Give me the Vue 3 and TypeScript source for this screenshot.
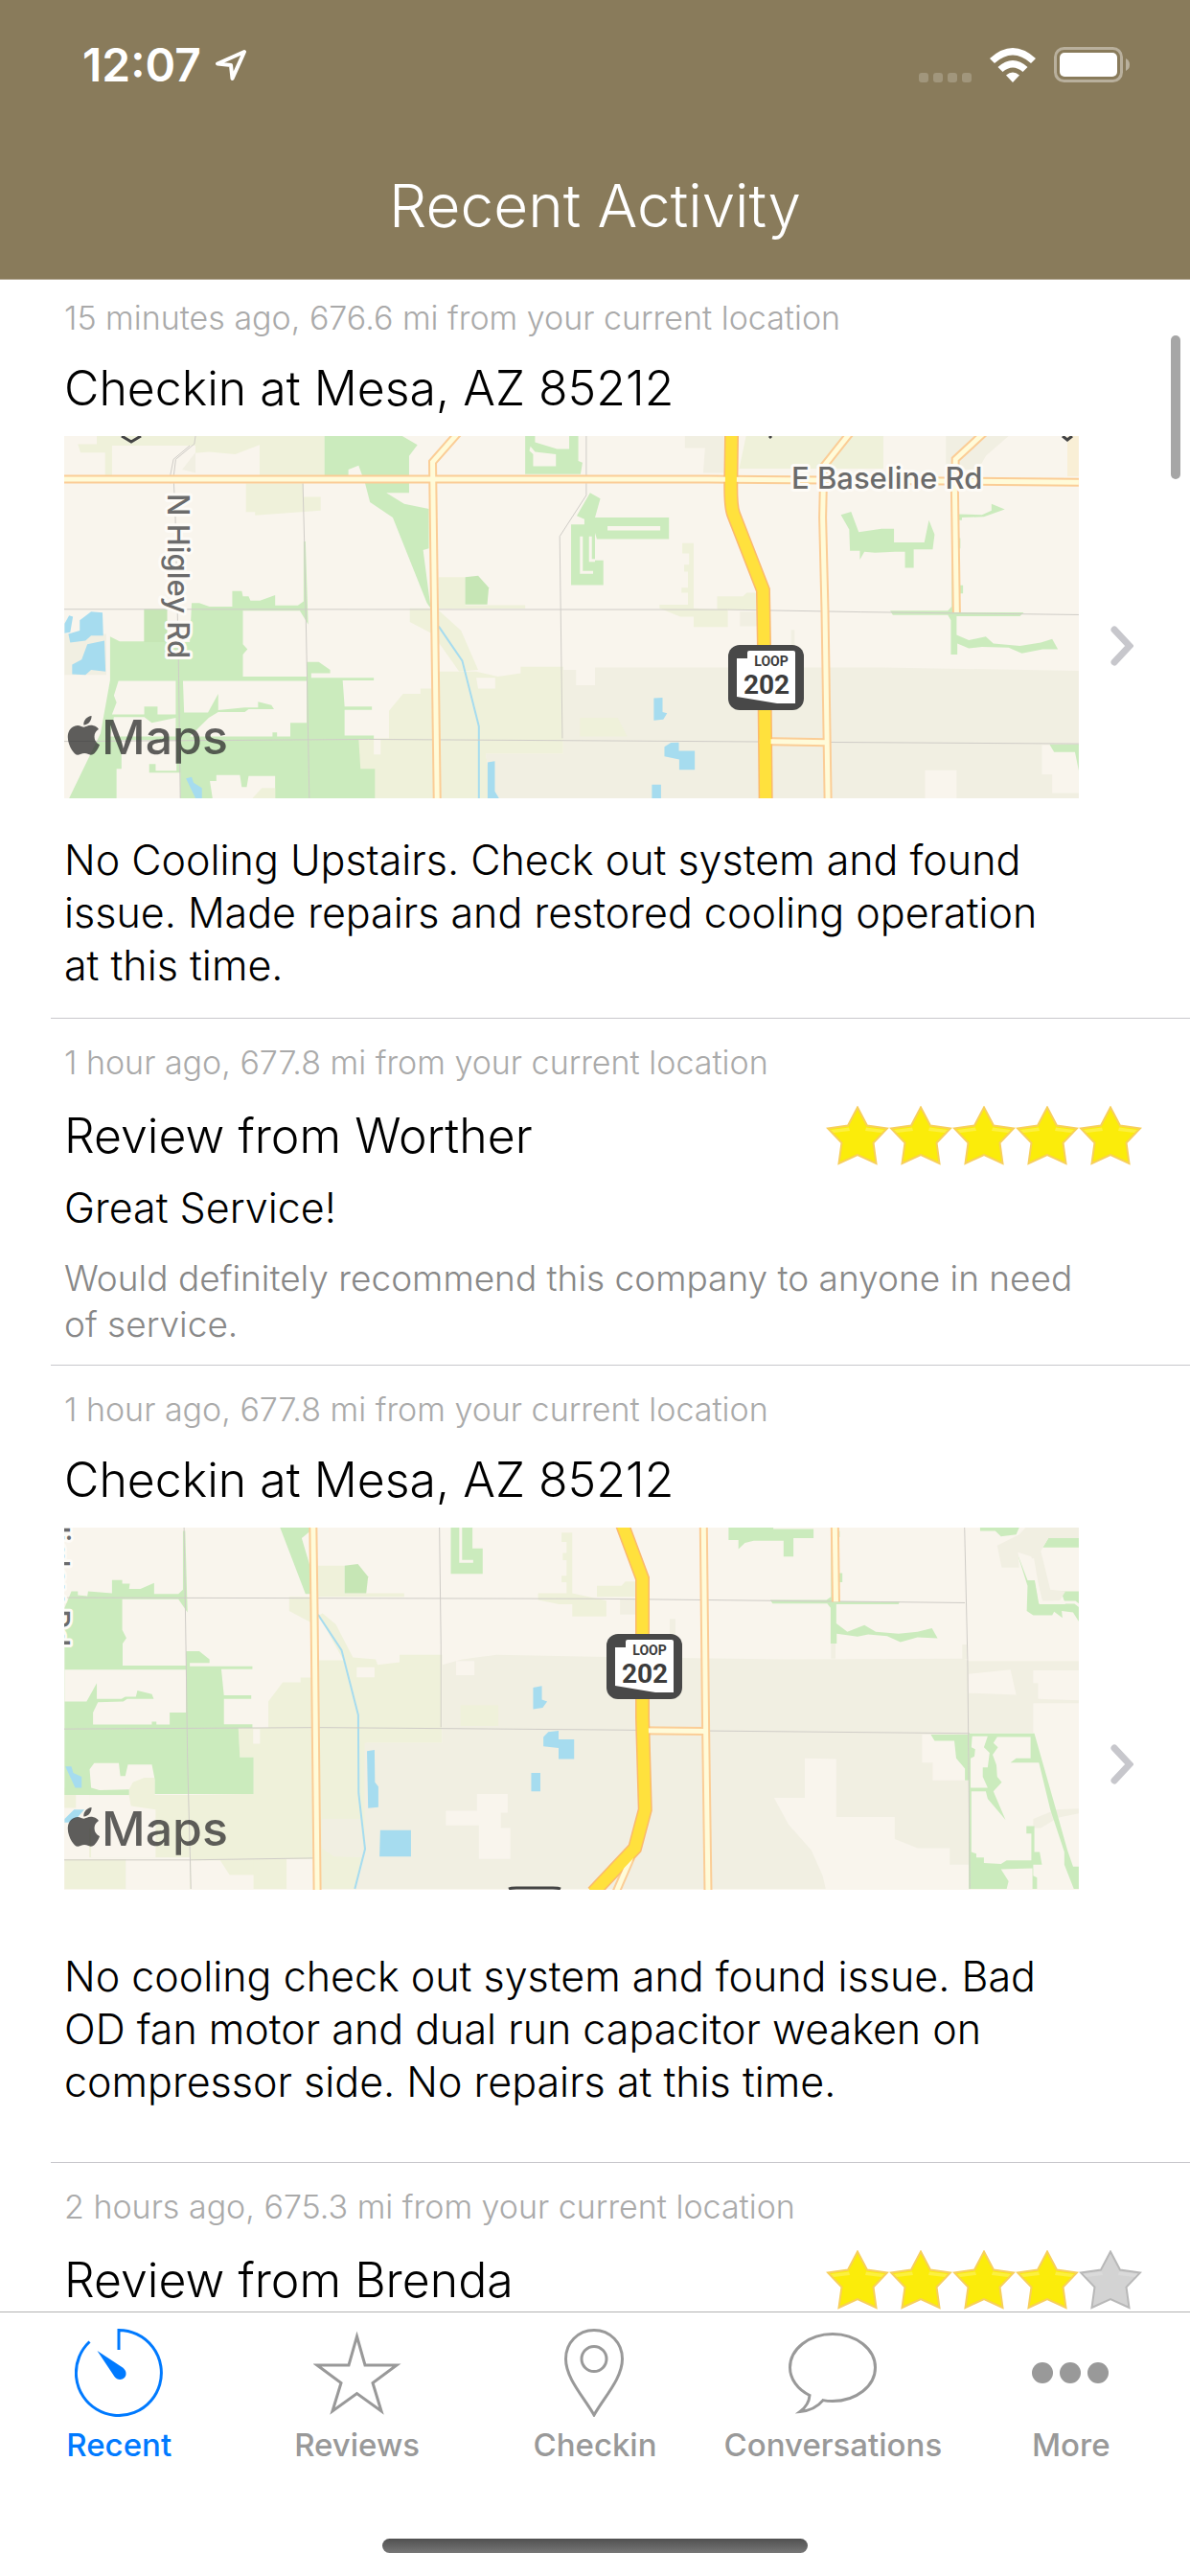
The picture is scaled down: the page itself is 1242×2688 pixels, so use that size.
<script setup lang="ts">
type ShapeKind = 'olive' | 'beige' | 'sand' | 'cream' | 'green' | 'park' | 'water' | 'stream' | 'lane'

interface Shape {
  kind: ShapeKind
  east?: boolean
  d: string
}

interface Road {
  kind: 'street' | 'road' | 'highway'
  east?: boolean
  d: string
}

interface Label {
  text: string
  x: number
  y: number
  vertical?: boolean
}

interface MapTile {
  top: number
  scaleY: number
  shapes: Shape[]
  roads: Road[]
  labels: Label[]
  shield: { x: number; y: number }
  extra: string
}

interface Checkin {
  type: 'checkin'
  meta: string
  title: string
  body: string
  roomy: boolean
  map: MapTile
}

interface Review {
  type: 'review'
  meta: string
  title: string
  stars: number
  headline: string
  comment: string
}

const northMap: MapTile = {
  top: 462,
  scaleY: 0.3572,
  shapes: [
    { kind: 'olive', d: 'M255 462H855V578H684V488L620 515 550 508 515 512V490H295V578H277V510H212L205 486H255Z' },
    { kind: 'olive', d: 'M648 600H800V640H845V680L672 694V684H648Z' },
    { kind: 'olive', d: 'M1156 874H1226V956H1384V966H1156ZM1080 965H1150L1215 1030 1260 1145 1210 1150 1140 1040 1080 1005Z' },
    { kind: 'olive', d: 'M1108 1200H1137V1150H1255L1312 1165 1372 1155V1136H1484V1390H1280L1300 1520H725V1345H1025V1265L1062 1215H1108Z' },
    { kind: 'cream', d: 'M1255 1168H1305V1200H1260ZM985 1347H1003V1392H985Z' },
    { kind: 'beige', d: 'M170 1040H280V1160H170ZM480 560L515 510V570Z' },
    { kind: 'beige', east: true, d: 'M-84 1145H-50V1190H0V1138H760L1275 1148V1520H-268L-288 1390H-84Z' },
    { kind: 'olive', east: true, d: 'M-40 1285H60L85 1340H-40Z' },
    { kind: 'green', d: 'M855 462H1060L1100 488 1078 520V628H1018L1065 660 1130 675V790L1115 795 1135 965 1125 950 1035 700 975 655 962 600 945 548 918 560V578H855Z' },
    { kind: 'park', d: 'M1226 874L1260 870 1288 905 1284 954H1226Z' },
    { kind: 'green', d: 'M290 1048L315 1062H380V968H440V1064H500L505 950H525L552 960 612 960V915H637L640 930H655L660 943H685L725 927V957H785L800 945V770H805L812 1012 790 972H640V1070L652 1085 640 1100V1165H808V1122H840L870 1145V1155H820V1168H985V1176H903L908 1252H980V1262H908V1337H985V1347H945L950 1434H988V1520H725V1455H655L650 1487H637L632 1452H570V1470H553L560 1520H475V1445H393V1420H410V1440H465V1350H320V1434H307V1520H182L265 1330 290 1175Z' },
    { kind: 'park', d: 'M380 968H440V1064H380Z' },
    { kind: 'cream', d: 'M312 1177H463V1275H415V1252H380V1275H295L307 1240 300 1220ZM482 1177H808V1300H765V1340H730V1328H718V1340H500L550 1285 575 1268H645L655 1260H722L715 1248 680 1238V1255H645L575 1263V1215L548 1270H485ZM300 1283H380L400 1300 463 1285V1340H290Z' },
    { kind: 'olive', d: 'M665 1520L690 1490H725V1520Z' },
    { kind: 'green', d: 'M1384 462H1524V535L1535 540 1530 573H1384Z' },
    { kind: 'cream', d: 'M1398 492L1410 508 1465 515V550H1405V515L1395 505ZM1410 462H1500V500H1468L1410 480Z' },
    { kind: 'water', d: 'M210 1000L240 975 270 978 272 1045 240 1045 225 1060 185 1065 180 1040 210 1030ZM170 1010L182 986 192 990 185 1035 170 1038ZM230 1070L275 1060 278 1150 240 1145 225 1160 190 1158V1130L215 1115ZM490 1462L505 1458 510 1475 532 1490V1520H515ZM1285 1415L1304 1412V1500L1315 1520H1285Z' },
    { kind: 'stream', d: 'M1156 1018L1218 1118 1262 1310V1520' },
    { kind: 'beige', east: true, d: 'M237 462H340V570H285L290 497H237ZM925 462H1090L1030 520 1010 560H925ZM382 975H428V1018H382ZM517 1028H526V1080H517Z' },
    { kind: 'olive', east: true, d: 'M398 462H760V557H380ZM230 775H260V965L350 970V1020H260V990H225L170 965V955H245V920H228V905H245V858H235V838H248V805H230ZM322 930H390L400 920H430V970H322Z' },
    { kind: 'sand', east: true, d: 'M1245 462H1275V580H1245Z' },
    { kind: 'green', east: true, d: 'M-63 720H-28V705L-48 695-13 628 14 645 0 700H195V763H5L0 745V825H22V897H-63Z' },
    { kind: 'cream', east: true, d: 'M33 725H172V738H33Z' },
    { kind: 'lane', east: true, d: 'M-36 755V860H-5M-12 755V825H0' },
    { kind: 'green', east: true, d: 'M648 692L675 683 695 743 755 733H788V773H868L880 708 895 750 890 793H840V847H817V800H790L738 803 710 800 698 823V797H672L670 735Z' },
    { kind: 'green', east: true, d: 'M955 690L1020 692 1045 680V660L1080 676 1025 698 967 700V708H955Z' },
    { kind: 'green', east: true, d: 'M778 972H930L940 960V760H963V790H953V898H970V922H960V977H1130L1120 988H953V1043L985 1058 1030 1048 1050 1068 1120 1075 1175 1065 1205 1055 1220 1085 1180 1085 1125 1097 1090 1080 1020 1078 985 1082 955 1068V1100H938V1000L930 985H785Z' },
    { kind: 'cream', east: true, d: 'M1178 1365H1275V1505H1205V1450H1178ZM870 1438H953V1520H870Z' },
    { kind: 'green', east: true, d: 'M1198 1363H1275V1440L1265 1385H1210Z' },
    { kind: 'water', east: true, d: 'M155 1228L178 1226V1268L190 1272 180 1290 155 1293ZM183 1370L200 1358 221 1357V1382H263V1437H222V1407L183 1398ZM150 1480H174V1520H150Z' },
  ],
  roads: [
    { kind: 'street', east: true, d: 'M-1399 968L350 969 700 976 1275 984' },
    { kind: 'street', d: 'M169 1354L970 1348 1568 1352 2843 1361' },
    { kind: 'street', d: 'M515 462L512 485 463 530 458 575V600L462 700 470 1100 475 1520' },
    { kind: 'street', d: 'M500 490L457 530 449 575V600' },
    { kind: 'street', d: 'M798 600L802 770 808 1100 815 1520' },
    { kind: 'street', d: 'M1545 462V635L1475 755 1482 1345' },
    { kind: 'road', east: true, d: 'M-1399 588H300L1275 597' },
    { kind: 'road', d: 'M1208 452L1140 538 1145 965 1152 1530' },
    { kind: 'road', east: true, d: 'M673 452L603 550 600 700 606 970 614 1530' },
    { kind: 'road', east: true, d: 'M1026 452L950 530 948 620 953 977' },
    { kind: 'road', east: true, d: 'M434 1354L612 1357' },
    { kind: 'highway', east: true, d: 'M360 452L358 610Q358 670 365 690L443 912 446 1100 450 1530' },
  ],
  labels: [
    { text: 'N Higley Rd', x: 108, y: 60, vertical: true },
    { text: 'E Baseline Rd', x: 759, y: 55 },
  ],
  shield: { x: 693, y: 218 },
  extra: 'M60 0L70 6 80 0M736 0L738 2M1042 0L1047 4 1052 0',
}

const southMap: MapTile = {
  top: 481,
  scaleY: 0.3828,
  shapes: [
    { kind: 'olive', d: 'M762 670H820V740L762 708ZM838 585H907V660H1065V670H838Z' },
    { kind: 'olive', d: 'M850 715L885 745 930 835 990 840 995 855 1053 848V828H1165V1068H965L970 1360 935 1466H500V1210H668V1107H632L628 1027H707V955L745 903H792V890H840V843H905L840 720Z' },
    { kind: 'olive', d: 'M170 1385H332V1466H170ZM340 1195L350 1175 380 1163H408V1210H668V1466H640V1380H235V1212H340ZM170 1190H200V1245H170ZM668 1207H840V1385H500V1210Z' },
    { kind: 'cream', d: 'M235 1212H340L345 1240 410 1250V1380H240V1300H235ZM332 1388H500V1466H332ZM503 1388H580L605 1428H668V1466H503ZM755 1385H825V1466H755Z' },
    { kind: 'cream', d: 'M940 862H987V889H940ZM667 1030H685V1070H667Z' },
    { kind: 'beige', east: true, d: 'M-403 855L-350 840-260 828 0 833 500 840 970 838 985 845H1275V960H1155V1040H985V1400H935V1355H850L790 1330V1270H636V1112L553 1110V1218H472L510 1290 570 1360 600 1430 608 1466H-633L-607 1355V1068H-403Z' },
    { kind: 'cream', east: true, d: 'M985 880L1095 868 1110 937 985 932ZM1155 870H1275V952L1168 948V905H1155ZM862 1045H952L985 1170H890V1122H862Z' },
    { kind: 'cream', d: 'M1175 1253H1257V1207H1338V1258H1320V1300H1345V1384H1262V1293H1175ZM1202 845H1250V883H1202Z' },
    { kind: 'olive', d: 'M1213 965H1313V1022H1213Z' },
    { kind: 'beige', d: 'M848 1275H950L960 1380 880 1378 848 1355Z' },
    { kind: 'green', d: 'M738 481H818V490L795 510 818 590V662H805Z' },
    { kind: 'park', d: 'M908 585L943 580 970 615 965 660H908Z' },
    { kind: 'green', d: 'M1188 481H1245V538H1272V607H1188Z' },
    { kind: 'lane', d: 'M1214 475V573H1247' },
    { kind: 'green', d: 'M170 700L188 655H205V665L230 668 232 655 295 660V624H322V634H342L340 648H370L406 632V662H470L482 650V490H488L494 712 470 676H322V760L333 782 323 797V857H490V818H525L552 840V850H500V859H665V867H583L590 938H662V948H590V1017H665V1027H628L632 1107H668V1207H408V1168L400 1127H337L330 1158H317L313 1123H248L236 1140 240 1190 262 1197 340 1195V1210H170Z' },
    { kind: 'cream', d: 'M170 868H490V985H447V1018H412V1010H400V1018H245V985L258 957 325 955 335 948H405L400 935 362 925 358 942H330L320 948H255V905L228 955H170Z' },
    { kind: 'water', d: 'M172 1132H188L193 1150 215 1160V1190H198ZM170 1275L195 1250H222L205 1270 180 1285H170ZM967 1090L987 1087 988 1175 997 1187V1243L970 1246ZM1002 1306H1083V1378H1000ZM1405 917L1428 913V950L1442 955 1430 972 1405 976ZM1432 1052L1445 1038 1472 1035V1058H1513V1112H1472V1082L1432 1077ZM1400 1150H1424V1200H1400Z' },
    { kind: 'stream', d: 'M838 718L900 815 944 992 945 1205 962 1357 935 1466' },
    { kind: 'olive', east: true, d: 'M-88 495H-60V660L30 680V723H-60V690H-95L-150 678V660H-75V630H-88V612H-75V570H-85V550H-75V520H-88ZM5 640H70L80 628H110V670H5Z' },
    { kind: 'beige', east: true, d: 'M66 675H110V718H66ZM197 730H212V780H197ZM622 797H634V838H622ZM968 800H980V840H968Z' },
    { kind: 'green', east: true, d: 'M352 481H470V485H576V510H523V560H497V517H418L395 523 378 540V515H352Z' },
    { kind: 'green', east: true, d: 'M462 678H610L622 670V490H645V507H637V605H652V630H640V682H803L800 690H636V742L665 765 710 747 740 765 800 770 850 765 888 755 903 783 850 780 805 793 770 777 720 772 692 778 637 770V797H621V700L612 688H468Z' },
    { kind: 'green', east: true, d: 'M1015 481H1118L1110 500 1070 505 1055 490H1015ZM1195 510H1275V535H1180ZM1112 548L1140 625H1160L1172 690H1275V737L1260 712 1230 708 1232 727 1210 710 1205 720H1155L1138 708 1140 640ZM1228 655H1275V690H1240Z' },
    { kind: 'beige', east: true, d: 'M1060 530L1118 500 1135 481H1275V510H1195L1175 545 1200 650 1240 655 1225 680 1180 683 1150 560 1115 548 1118 590H1072Z' },
    { kind: 'lane', east: true, d: 'M1153 565L1173 685H1265L1278 695' },
    { kind: 'beige', east: true, d: 'M1155 1275L1215 1250 1275 1247V1260L1220 1272 1175 1300H1155Z' },
    { kind: 'green', east: true, d: 'M885 1045H985V1170H975V1138L952 1110 947 1062H895Z' },
    { kind: 'green', east: true, d: 'M985 1042H1158L1215 1250 1245 1360 1260 1405H1275V1466H1262L1237 1400V1365L1200 1250 1170 1122H1095L1110 1110H1148V1052H1060L1050 1068 1062 1080 1048 1100 1058 1128 1060 1160 1072 1175 1050 1200 1082 1278 1035 1220 1030 1200H992V1365L1005 1370V1380H1025V1395L1070 1398 1085 1388H1150V1315H1137V1295H1158V1365H1172L1178 1400H1155V1430L1165 1435V1466H1153V1410L1070 1412 1090 1445 1085 1466H985Z' },
    { kind: 'cream', east: true, d: 'M994 1050H1035L1025 1080 1040 1095 1035 1135H1022V1160L1035 1190H990V1110L1000 1105 1002 1085 992 1080Z' },
  ],
  roads: [
    { kind: 'street', east: true, d: 'M-1398 672L0 675 975 686' },
    { kind: 'street', d: 'M169 1030L840 1026 1568 1032 2555 1042' },
    { kind: 'street', d: 'M485 481L490 820 494 1110 503 1466' },
    { kind: 'street', d: 'M1158 481L1162 800V1025' },
    { kind: 'street', d: 'M169 1387H500L825 1382' },
    { kind: 'street', east: true, d: 'M974 481L982 840 988 1466' },
    { kind: 'road', d: 'M825 470L828 700 836 1476' },
    { kind: 'road', east: true, d: 'M286 470L292 1035 298 1476' },
    { kind: 'road', east: true, d: 'M632 470L635 683' },
    { kind: 'road', east: true, d: 'M112 1034L290 1036' },
    { kind: 'road', east: true, d: 'M95 1380L55 1476' },
    { kind: 'highway', east: true, d: 'M71 470L125 620V1000L132 1250 105 1355-5 1476' },
  ],
  labels: [{ text: 'N Higley Rd', x: -17, y: -48, vertical: true }],
  shield: { x: 566, y: 111 },
  extra: 'M464 377Q466 376 472 376H510Q516 376 518 377',
}

const items: (Checkin | Review)[] = [
  {
    type: 'checkin',
    meta: '15 minutes ago, 676.6 mi from your current location',
    title: 'Checkin at Mesa, AZ 85212',
    body: 'No Cooling Upstairs. Check out system and found issue. Made repairs and restored cooling operation at this time.',
    roomy: false,
    map: northMap,
  },
  {
    type: 'review',
    meta: '1 hour ago, 677.8 mi from your current location',
    title: 'Review from Worther',
    stars: 5,
    headline: 'Great Service!',
    comment: 'Would definitely recommend this company to anyone in need of service.',
  },
  {
    type: 'checkin',
    meta: '1 hour ago, 677.8 mi from your current location',
    title: 'Checkin at Mesa, AZ 85212',
    body: 'No cooling check out system and found issue. Bad OD fan motor and dual run capacitor weaken on compressor side. No repairs at this time.',
    roomy: true,
    map: southMap,
  },
  {
    type: 'review',
    meta: '2 hours ago, 675.3 mi from your current location',
    title: 'Review from Brenda',
    stars: 4,
    headline: '',
    comment: '',
  },
]

const tabs = [
  { name: 'Recent', icon: 'recent' },
  { name: 'Reviews', icon: 'reviews' },
  { name: 'Checkin', icon: 'checkin' },
  { name: 'Conversations', icon: 'conversations' },
  { name: 'More', icon: 'more' },
]

// Tile geometry is drawn in two halves that share one plane; the eastern half starts at 1568.
const frame = (tile: MapTile, east?: boolean): string =>
  `scale(0.396 ${tile.scaleY}) translate(${east ? 1399 : -169} ${-tile.top})`

const paved = (tile: MapTile): Road[] => tile.roads.filter((road) => road.kind !== 'street')
</script>

<template>
  <div class="app">
    <header class="header">
      <div class="status">
        <div class="status-left">
          <span class="clock">12:07</span>
          <svg class="arrow" width="34" height="34" viewBox="0 0 34 34">
            <path d="M31 3L3 15.500L17 17L18.500 31Z" fill="none" stroke="#fff" stroke-width="4" stroke-linejoin="round" />
          </svg>
        </div>
        <div class="status-right">
          <svg width="55" height="36" viewBox="0 0 55 36" fill="#a1967c">
            <rect y="26" width="10" height="10" rx="3" />
            <rect x="15" y="26" width="10" height="10" rx="3" />
            <rect x="30" y="26" width="10" height="10" rx="3" />
            <rect x="45" y="26" width="10" height="10" rx="3" />
          </svg>
          <svg width="48" height="36" viewBox="0 0 48 36" fill="#fff">
            <path d="M24 36L17 28.500Q24 22.500 31 28.500Z" />
            <path d="M8.500 20Q24 6 39.500 20L34.500 25Q24 16 13.500 25Z" />
            <path d="M0 11Q24 -11 48 11L43 16Q24 -1 5 16Z" />
          </svg>
          <svg width="80" height="38" viewBox="0 0 80 38">
            <rect x="1.500" y="1.500" width="69" height="34" rx="9" fill="none" stroke="#b9b09d" stroke-width="3" />
            <rect x="6" y="6" width="60" height="25" rx="5" fill="#fff" />
            <path d="M75 12Q79 14 79 18.500T75 25Z" fill="#b9b09d" />
          </svg>
        </div>
      </div>
      <h1 class="title">Recent Activity</h1>
    </header>

    <main class="feed">
      <ul class="list">
        <li v-for="(item, i) in items" :key="i" class="item">
          <article class="content">
            <p class="meta">{{ item.meta }}</p>

            <template v-if="item.type === 'checkin'">
              <h2 class="heading">{{ item.title }}</h2>
              <svg class="map" viewBox="0 0 1059 378" role="img" aria-label="Map of the checkin">
                <rect width="1059" height="378" fill="#f9f5ed" />
                <path
                  v-for="(s, n) in item.map.shapes"
                  :key="'s' + n"
                  :class="s.kind"
                  :transform="frame(item.map, s.east)"
                  :d="s.d"
                />
                <path
                  v-for="(r, n) in item.map.roads"
                  :key="'e' + n"
                  :class="[r.kind, 'edge']"
                  :transform="frame(item.map, r.east)"
                  :d="r.d"
                />
                <path
                  v-for="(r, n) in paved(item.map)"
                  :key="'f' + n"
                  :class="[r.kind, 'fill']"
                  :transform="frame(item.map, r.east)"
                  :d="r.d"
                />
                <path :d="item.map.extra" fill="none" stroke="#444" stroke-width="3" />
                <text
                  v-for="label in item.map.labels"
                  :key="label.text"
                  class="place"
                  :transform="`translate(${label.x} ${label.y})${label.vertical ? ' rotate(90)' : ''}`"
                >{{ label.text }}</text>
                <g :transform="`translate(${item.map.shield.x} ${item.map.shield.y})`">
                  <rect width="79" height="68" rx="12" fill="#484848" />
                  <path d="M20 8Q20 6 22 6H68Q70 6 70 8V61H51L9 54V14H20Z" fill="#fff" />
                  <text class="loop" x="45" y="22">LOOP</text>
                  <text class="number" x="40" y="51">202</text>
                </g>
                <g class="brand">
                  <path
                    transform="translate(0 292) scale(1.7)"
                    d="M12.152 6.896c-.948 0-2.415-1.078-3.96-1.04-2.04.027-3.91 1.183-4.961 3.014-2.117 3.675-.546 9.103 1.519 12.09 1.013 1.454 2.208 3.09 3.792 3.039 1.52-.065 2.09-.987 3.935-.987 1.831 0 2.35.987 3.96.948 1.637-.026 2.676-1.48 3.676-2.948 1.156-1.688 1.636-3.325 1.662-3.415-.039-.013-3.182-1.221-3.22-4.857-.026-3.04 2.48-4.494 2.597-4.559-1.429-2.09-3.623-2.324-4.39-2.376-2-.156-3.675 1.09-4.61 1.09zM15.53 3.83c.843-1.012 1.4-2.427 1.245-3.83-1.207.052-2.662.805-3.532 1.818-.78.896-1.454 2.338-1.273 3.714 1.338.104 2.715-.688 3.559-1.701"
                  />
                  <text x="39" y="332">Maps</text>
                </g>
              </svg>
              <p class="body" :class="{ roomy: item.roomy }">{{ item.body }}</p>
            </template>

            <template v-else>
              <div class="review-row">
                <h2 class="heading">{{ item.title }}</h2>
                <div class="stars" role="img" :aria-label="`${item.stars} of 5 stars`">
                  <svg v-for="n in 5" :key="n" width="66" height="62" viewBox="0 0 66 62" :class="{ off: n > item.stars }">
                    <path class="star" d="M33 1.500L43 20.500 64 23.500 49.500 38.500 52.500 60 33 51 13.500 60 16.500 38.500 2 23.500 23 20.500Z" />
                    <path class="shine" d="M24 22.500L5 25 8 28 25 26ZM42 22.500L61 25 58 28 41 26Z" />
                  </svg>
                </div>
              </div>
              <p v-if="item.headline" class="headline">{{ item.headline }}</p>
              <p v-if="item.comment" class="comment">{{ item.comment }}</p>
            </template>
          </article>
          <svg v-if="item.type === 'checkin'" class="chevron" width="24" height="42" viewBox="0 0 24 42">
            <path d="M4 4L20 21L4 38" fill="none" stroke="#c7c7cc" stroke-width="7" stroke-linecap="round" stroke-linejoin="miter" />
          </svg>
        </li>
      </ul>
      <div class="scroll-thumb"></div>
    </main>

    <footer class="tabbar">
      <nav class="tabs">
        <a v-for="(tab, n) in tabs" :key="tab.name" href="#" class="tab" :class="{ active: n === 0 }">
          <svg width="92" height="92" viewBox="0 0 92 92" fill="none" stroke="currentColor" stroke-width="3">
            <template v-if="tab.icon === 'recent'">
              <path d="M46 22V1.500A44.500 44.500 0 1 1 15.500 13.500" />
              <path d="M23.500 23L50 40.500C54 43.500 54.500 48 52 51C49 54 44 53.500 41.500 50Z" fill="currentColor" stroke="none" />
            </template>
            <path v-else-if="tab.icon === 'reviews'" d="M45.500 8L54 38H87L62 56.500 71 86 45.500 67.500 20 86 29 56.500 4 38H37Z" />
            <template v-else-if="tab.icon === 'checkin'">
              <path d="M45 1.500C28 1.500 15.500 15 15.500 31.500C15.500 52 35 72 45 90C55 72 74.500 52 74.500 31.500C74.500 15 62 1.500 45 1.500Z" />
              <circle cx="45" cy="31.500" r="13" />
            </template>
            <path
              v-else-if="tab.icon === 'conversations'"
              d="M36 74.600C39 75.200 42.500 75.500 46 75.500C70.600 75.500 90.500 59.800 90.500 40.500C90.500 21.200 70.600 5.500 46 5.500C21.400 5.500 1.500 21.200 1.500 40.500C1.500 52 9 63 22 69.500C21.500 77 18 82 12 86.500C22 85.500 30 82 36 74.600Z"
            />
            <g v-else fill="currentColor" stroke="none">
              <circle cx="16" cy="46" r="11" />
              <circle cx="45" cy="46" r="11" />
              <circle cx="74" cy="46" r="11" />
            </g>
          </svg>
          <span>{{ tab.name }}</span>
        </a>
      </nav>
      <div class="home"></div>
    </footer>
  </div>
</template>

<style>
body {
  margin: 0;
  background: #fff;
}
</style>

<style scoped>
.app {
  display: flex;
  flex-direction: column;
  height: 100vh;
  overflow: hidden;
  font-family: Inter, "Liberation Sans", sans-serif;
  font-weight: 300;
  color: #000;
}

h1,
h2,
p,
ul {
  margin: 0;
  padding: 0;
  font-weight: 300;
}

.header {
  position: relative;
  z-index: 1;
  flex: none;
  box-sizing: border-box;
  height: 292px;
  margin-bottom: -6px;
  padding-top: 40px;
  border-bottom: 1px solid #b5aa96;
  background: #897b5b;
  color: #fff;
}

.status {
  display: flex;
  align-items: center;
  justify-content: space-between;
  height: 56px;
  padding: 0 62px 0 86px;
}

.status-left,
.status-right {
  display: flex;
  align-items: center;
}

.status-left {
  gap: 14px;
}

.status-right {
  gap: 19px;
}

.clock {
  font-size: 48px;
  line-height: 56px;
  font-weight: 600;
}

.title {
  margin-top: 79px;
  font-size: 62px;
  line-height: 80px;
  text-align: center;
}

.feed {
  position: relative;
  flex: 1;
  min-height: 0;
  overflow: hidden;
}

.list {
  list-style: none;
}

.item {
  display: flex;
  align-items: center;
  gap: 33px;
  margin-left: 53px;
  padding-left: 14px;
  border-bottom: 1px solid #c8c7cc;
}

.content {
  flex: 1;
  min-width: 0;
  padding-top: 24px;
}

.meta {
  font-size: 34px;
  line-height: 44px;
  color: #aaa;
}

.heading {
  font-size: 50px;
  line-height: 60px;
}

.meta + .heading {
  margin-top: 21px;
}

.map {
  display: block;
  width: 100%;
  margin-top: 20px;
}

.body {
  padding: 37px 20px 27px 0;
  font-size: 43px;
  line-height: 55px;
}

.body.roomy {
  padding: 63px 20px 56px 0;
}

.chevron {
  flex: none;
  margin-right: 59px;
}

.review-row {
  display: flex;
  align-items: center;
  justify-content: space-between;
  height: 66px;
  margin-top: 21px;
  padding-right: 50px;
}

.stars {
  display: flex;
}

.star {
  fill: #fbec0a;
  stroke: #f7cf5c;
  stroke-width: 2;
}

.shine {
  fill: #fcf040;
}

.off .star {
  fill: #d3d3d3;
  stroke: #b8b8b8;
}

.off .shine {
  fill: #dadada;
}

.headline {
  margin-top: 15px;
  font-size: 43px;
  line-height: 55px;
}

.comment {
  margin-top: 22px;
  padding: 0 116px 18px 0;
  font-size: 37px;
  line-height: 48px;
  color: #888;
}

.scroll-thumb {
  position: absolute;
  top: 64px;
  right: 10px;
  width: 10px;
  height: 150px;
  border-radius: 5px;
  background: #a6a6a6;
}

.olive {
  fill: #eff1da;
}

.beige {
  fill: #f1efe2;
}

.sand {
  fill: #f9efd6;
}

.cream {
  fill: #f9f5ed;
}

.green {
  fill: #cbebbd;
}

.park {
  fill: #c6e6b5;
}

.water {
  fill: #a6dcef;
}

.stream,
.lane,
.edge,
.fill {
  fill: none;
  vector-effect: non-scaling-stroke;
}

.stream {
  stroke: #a6dcef;
  stroke-width: 2;
}

.lane {
  stroke: #f9f5ed;
  stroke-width: 3;
}

.street.edge {
  stroke: #cfccc7;
  stroke-width: 1;
}

.road.edge {
  stroke: #fbcd96;
  stroke-width: 9;
}

.road.fill {
  stroke: #fffbd9;
  stroke-width: 5;
}

.highway.edge {
  stroke: #fbb96e;
  stroke-width: 15;
}

.highway.fill {
  stroke: #ffe13d;
  stroke-width: 12;
}

.place {
  font-size: 31px;
  font-weight: 500;
  fill: #6b6b6b;
  stroke: #fdfbf7;
  stroke-width: 6;
  stroke-linejoin: round;
  paint-order: stroke;
}

.loop,
.number {
  font-family: Roboto, "Liberation Sans", sans-serif;
  font-weight: 700;
  text-anchor: middle;
  fill: #3c3c3c;
}

.loop {
  font-size: 14px;
}

.number {
  font-size: 28px;
}

.brand {
  font-size: 50px;
  font-weight: 500;
  fill: #333;
  opacity: 0.78;
}

.tabbar {
  flex: none;
  border-top: 1px solid #b2b2b2;
  background: #fff;
}

.tabs {
  display: grid;
  grid-template-columns: repeat(5, 1fr);
  padding-top: 17px;
}

.tab {
  display: flex;
  flex-direction: column;
  align-items: center;
  gap: 11px;
  color: #999;
  font-size: 33px;
  line-height: 36px;
  font-weight: 500;
  text-decoration: none;
}

.tab.active {
  color: #007aff;
}

.home {
  width: 444px;
  height: 15px;
  margin: 80px auto 24px;
  border-radius: 8px;
  background: linear-gradient(#505050, #777);
}
</style>
